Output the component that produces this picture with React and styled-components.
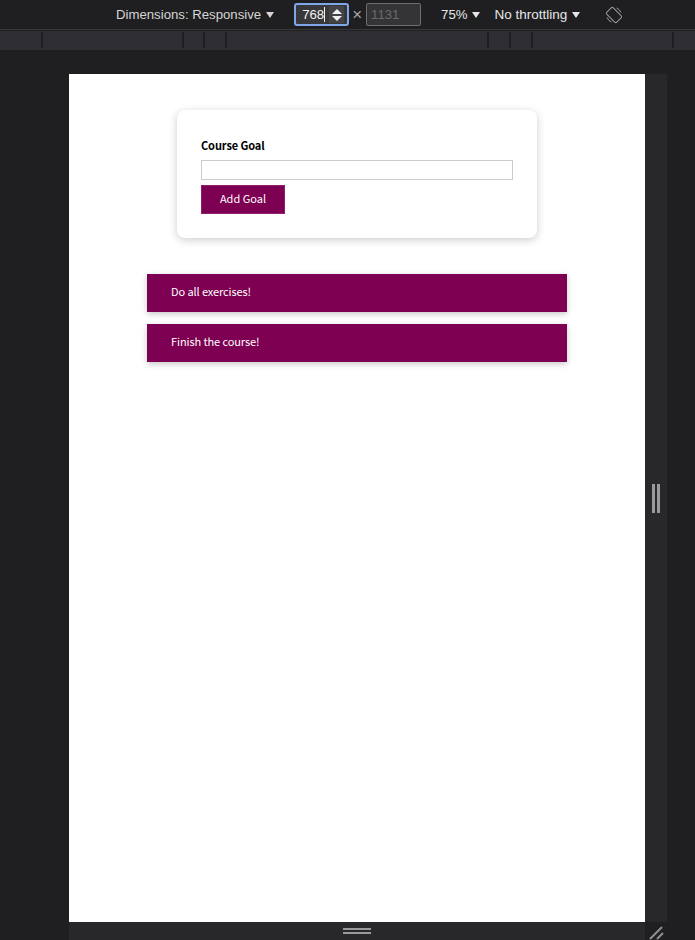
import React from 'react';
import styled, { createGlobalStyle } from 'styled-components';

const GlobalStyle = createGlobalStyle`
  * {
    box-sizing: border-box;
  }

  html,
  body {
    margin: 0;
    background: #1f1f21;
  }
`;

const Shell = styled.div`
  width: 695px;
  height: 940px;
  display: flex;
  flex-direction: column;
  overflow: hidden;
  background: #1f1f21;
`;

const Toolbar = styled.div`
  height: 30px;
  flex: none;
  display: flex;
  align-items: center;
  padding-left: 116px;
  border-bottom: 1px solid #39393b;
  font-family: 'Liberation Sans', Arial, sans-serif;
  font-size: 13.2px;
  color: #d5d5d6;
`;

const Menu = styled.span`
  display: flex;
  align-items: center;
  gap: 5px;
  margin-left: ${props => props.marginLeft || '0'};
  color: ${props => props.color || '#d5d5d6'};
  font-size: ${props => props.fontSize || 'inherit'};
  white-space: nowrap;
`;

const Caret = styled.span`
  width: 0;
  height: 0;
  border-left: 4px solid transparent;
  border-right: 4px solid transparent;
  border-top: 6px solid currentColor;
`;

const WidthBox = styled.div`
  width: 55px;
  height: 23px;
  margin-left: 20px;
  display: flex;
  align-items: center;
  justify-content: space-between;
  padding: 0 3px 0 6px;
  background: #38383a;
  border: 2px solid #7fa6e8;
  border-radius: 3px;
  color: #f2f2f2;
`;

const Value = styled.span`
  border-right: 1px solid #f2f2f2;
  line-height: 15px;
`;

const Spinner = styled.span`
  width: 15px;
  height: 17px;
  display: flex;
  flex-direction: column;
  align-items: center;
  justify-content: center;
  gap: 2px;
  background: #444446;
  color: #f2f2f2;
`;

const SpinArrow = styled.span`
  width: 0;
  height: 0;
  border-left: 5px solid transparent;
  border-right: 5px solid transparent;
  ${props => (props.up ? 'border-bottom: 5px solid currentColor;' : 'border-top: 5px solid currentColor;')}
`;

const Times = styled.span`
  margin-left: 3px;
  font-size: 17px;
  color: #a3a3a5;
`;

const HeightBox = styled.div`
  width: 55px;
  height: 23px;
  margin-left: 4px;
  display: flex;
  align-items: center;
  padding-left: 4px;
  background: #343436;
  border: 1px solid #6d6d6f;
  border-radius: 2px;
  color: #69696b;
`;

const RotateIcon = styled.svg`
  width: 18px;
  height: 18px;
  margin-left: 25px;
  flex: none;
`;

const Ruler = styled.div`
  height: 19px;
  flex: none;
  margin-top: 1px;
  padding: 1px 0 2px;
  display: flex;
  background: #2f2f33;
`;

const RulerCell = styled.div`
  width: ${props => props.width}px;
  flex: none;
  border-right: 2px solid #1f1f21;
`;

const Stage = styled.div`
  flex: 1;
  display: flex;
  flex-direction: column;
  padding: 24px 0 0 69px;
  min-height: 0;
`;

const ViewRow = styled.div`
  flex: 1;
  display: flex;
  min-height: 0;
`;

const Page = styled.main`
  width: 576px;
  flex: none;
  padding-top: 36px;
  display: flex;
  flex-direction: column;
  align-items: center;
  background: #fff;
  font-family: 'Noto Sans CJK KR', 'Noto Sans', sans-serif;
`;

const SideHandle = styled.div`
  width: 22px;
  flex: none;
  display: flex;
  align-items: center;
  justify-content: center;
  gap: 2px;
  background: #28282a;
`;

const VerticalGrip = styled.span`
  width: 3px;
  height: 29px;
  background: #9a9a9c;
`;

const BottomHandle = styled.div`
  width: 576px;
  height: 18px;
  flex: none;
  position: relative;
  display: flex;
  flex-direction: column;
  align-items: center;
  justify-content: center;
  gap: 2px;
  background: #28282a;
`;

const HorizontalGrip = styled.span`
  width: 28px;
  height: 2px;
  background: #9a9a9c;
`;

const CornerGrip = styled.svg`
  position: absolute;
  right: -20px;
  bottom: 0;
  width: 16px;
  height: 14px;
`;

const Card = styled.section`
  width: 360px;
  height: 128px;
  padding: 27px 24px 0;
  background: #fff;
  border-radius: 8px;
  box-shadow: 0 2px 8px rgba(0, 0, 0, 0.2);
`;

const GoalLabel = styled.label`
  display: block;
  margin-bottom: 6px;
  font-size: 11px;
  line-height: 17px;
  font-weight: 700;
  letter-spacing: -0.1px;
  color: #000;
`;

const GoalInput = styled.input`
  display: block;
  width: 312px;
  height: 20px;
  padding: 0 3px;
  border: 1px solid #ccc;
  outline: none;
  background: #fff;
`;

const AddButton = styled.button`
  display: block;
  width: 84px;
  height: 29px;
  margin-top: 5px;
  padding: 0 0 4px;
  border: 1px solid #8f1f6a;
  background: #7d0052;
  color: #fff;
  font-family: inherit;
  font-size: 11px;
`;

const GoalList = styled.ul`
  width: 420px;
  margin: 36px 0 0;
  padding: 0;
  list-style: none;
  display: flex;
  flex-direction: column;
  gap: 12px;
`;

const GoalItem = styled.li`
  height: 38px;
  padding: 0 0 5px 24px;
  display: flex;
  align-items: center;
  background: #7d0052;
  color: #fff;
  font-size: 11px;
  letter-spacing: -0.1px;
  box-shadow: 0 2px 6px rgba(0, 0, 0, 0.22);
`;

const rulerCells = [43, 141, 21, 22, 262, 22, 22, 141];
const goals = ['Do all exercises!', 'Finish the course!'];

const App = () => (
  <Shell>
    <GlobalStyle />
    <Toolbar>
      <Menu>
        Dimensions: Responsive <Caret />
      </Menu>
      <WidthBox>
        <Value>768</Value>
        <Spinner>
          <SpinArrow up />
          <SpinArrow />
        </Spinner>
      </WidthBox>
      <Times>×</Times>
      <HeightBox>1131</HeightBox>
      <Menu marginLeft='20px' color='#e6e6e7'>
        75% <Caret />
      </Menu>
      <Menu marginLeft='14px' color='#e6e6e7' fontSize='13.5px'>
        No throttling <Caret />
      </Menu>
      <RotateIcon viewBox='0 0 18 18' fill='none' stroke='#9a9a9c' strokeWidth='1'>
        <rect x='4.5' y='2' width='9' height='14' rx='1.5' transform='rotate(-45 9 9)' />
        <path d='M11.5 2A8 8 0 0 1 16 6.5M2 11.5A8 8 0 0 0 6.5 16' />
      </RotateIcon>
    </Toolbar>
    <Ruler>
      {rulerCells.map((width, i) => (
        <RulerCell key={i} width={width} />
      ))}
    </Ruler>
    <Stage>
      <ViewRow>
        <Page>
          <Card>
            <GoalLabel>Course Goal</GoalLabel>
            <GoalInput type='text' />
            <AddButton type='button'>Add Goal</AddButton>
          </Card>
          <GoalList>
            {goals.map(goal => (
              <GoalItem key={goal}>{goal}</GoalItem>
            ))}
          </GoalList>
        </Page>
        <SideHandle>
          <VerticalGrip />
          <VerticalGrip />
        </SideHandle>
      </ViewRow>
      <BottomHandle>
        <HorizontalGrip />
        <HorizontalGrip />
        <CornerGrip viewBox='0 0 16 14' stroke='#8e8e90' strokeWidth='2'>
          <path d='M1 13 13 1M8 13 14 7' />
        </CornerGrip>
      </BottomHandle>
    </Stage>
  </Shell>
);

export default App;
